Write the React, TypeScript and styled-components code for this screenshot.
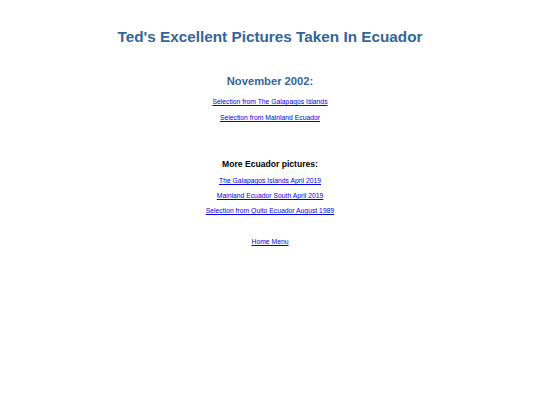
import React from 'react'
import styled, { createGlobalStyle } from 'styled-components'

const GlobalStyle = createGlobalStyle`
  html, body {
    margin: 0;
    padding: 0;
    background: #ffffff;
    font-family: "Liberation Sans", Arial, sans-serif;
  }
`

const Page = styled.div`
  display: flex;
  flex-direction: column;
  align-items: center;
  padding-top: 27px;
`

const Title = styled.h1`
  margin: 0;
  font-size: 15.3px;
  line-height: 19px;
  font-weight: bold;
  color: #336699;
`

const Heading = styled.h2<{ $dark?: boolean }>`
  margin: ${(p) => (p.$dark ? '37px 0 6px' : '28px 0 8px')};
  font-size: ${(p) => (p.$dark ? '8.6px' : '11.2px')};
  line-height: ${(p) => (p.$dark ? '11px' : '15px')};
  font-weight: bold;
  color: ${(p) => (p.$dark ? '#000000' : '#336699')};
`

const LinkList = styled.div<{ $gap: number }>`
  display: flex;
  flex-direction: column;
  align-items: center;
  gap: ${(p) => p.$gap}px;
`

const Link = styled.a`
  font-size: 6.8px;
  line-height: 9px;
  color: #0000ee;
  text-decoration: underline;
`

const Home = styled(Link)`
  margin-top: 21.5px;
`

export default function App() {
  return (
    <>
      <GlobalStyle />
      <Page>
        <Title>Ted's Excellent Pictures Taken In Ecuador</Title>
        <Heading>November 2002:</Heading>
        <LinkList $gap={7}>
          <Link href="#">Selection from The Galapagos Islands</Link>
          <Link href="#">Selection from Mainland Ecuador</Link>
        </LinkList>
        <Heading $dark>More Ecuador pictures:</Heading>
        <LinkList $gap={6}>
          <Link href="#">The Galapagos Islands April 2019</Link>
          <Link href="#">Mainland Ecuador South April 2019</Link>
          <Link href="#">Selection from Quito Ecuador August 1989</Link>
        </LinkList>
        <Home href="#">Home Menu</Home>
      </Page>
    </>
  )
}
